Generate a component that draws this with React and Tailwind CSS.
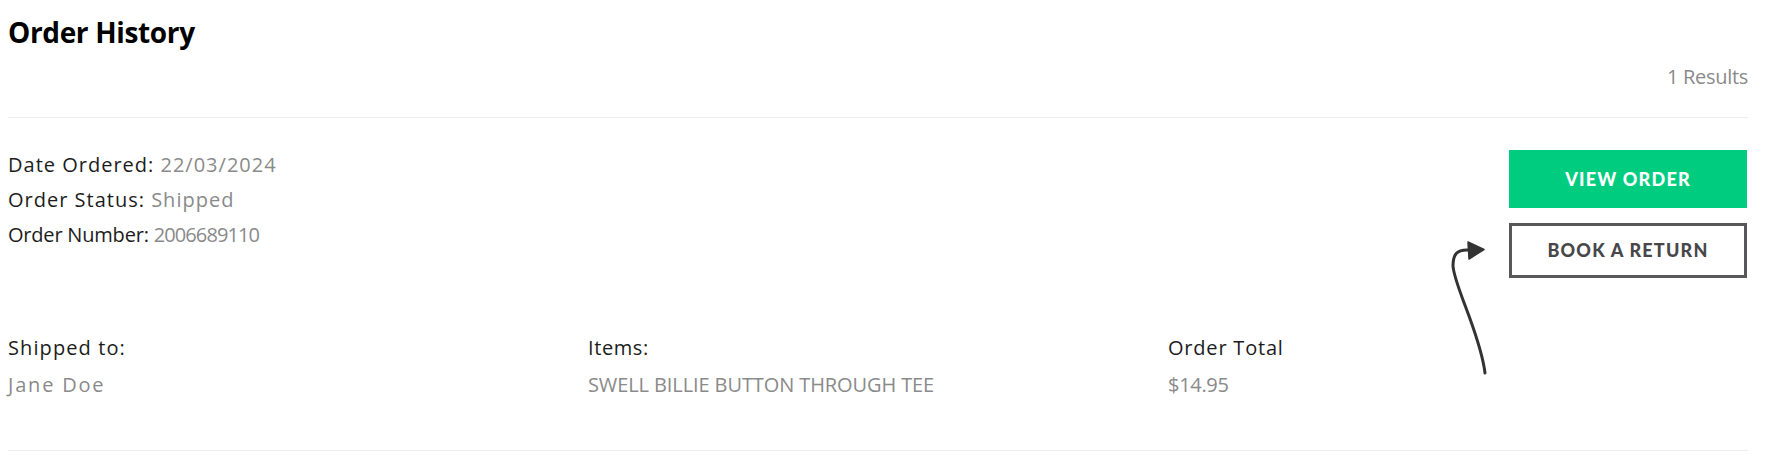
import React from "react";

function Arrow() {
  return (
    <svg
      className="absolute left-[-60px] top-[88px]"
      width="50"
      height="140"
      viewBox="0 0 50 140"
      fill="none"
    >
      <path
        d="M36 135 C34 118 28 100 20 78 C12 56 5 40 4 28 C4 16 8 12 18 12 L24 12"
        stroke="#333"
        strokeWidth="3"
        strokeLinecap="round"
        fill="none"
      />
      <path d="M19 4 L35 11.5 L20 21 Z" fill="#333" stroke="#333" strokeWidth="1.5" strokeLinejoin="round" />
    </svg>
  );
}

export default function App() {
  return (
    <div className="w-[1774px] h-[462px] bg-white pl-2 pr-[26px] font-['Open_Sans',sans-serif] text-[#1c1c1c]">
      <h1 className="pt-[15px] h-[50px] text-[28px] leading-[34px] font-bold tracking-[-0.35px] text-black">
        Order History
      </h1>
      <div className="mt-[14px] text-right text-[20px] leading-[26px] tracking-[-0.3px] text-[#8a8a8a]">1 Results</div>
      <div className="mt-[27px] h-px bg-[#ececec]" />
      <div className="mt-[29px] flex items-start justify-between">
        <div className="text-[20px] leading-[35px]">
          <div className="tracking-[1px]">
            Date Ordered: <span className="text-[#8a8a8a]">22/03/2024</span>
          </div>
          <div className="tracking-[1px]">
            Order Status: <span className="text-[#8a8a8a]">Shipped</span>
          </div>
          <div className="tracking-[-0.2px]">
            Order Number: <span className="text-[#8a8a8a] tracking-[-0.9px]">2006689110</span>
          </div>
        </div>
        <div className="relative mt-[3px] mr-px flex w-[238px] flex-col gap-[15px] font-['Lato',sans-serif]">
          <button className="h-[58px] w-full bg-[#00cc7f] text-[18px] font-black uppercase tracking-[1.2px] text-white">
            View Order
          </button>
          <button className="h-[55px] w-full border-[3px] border-[#58585a] bg-white text-[18px] font-black uppercase tracking-[1.2px] text-[#47474a]">
            Book a Return
          </button>
          <Arrow />
        </div>
      </div>
      <div className="mt-[51px] grid grid-cols-3 text-[20px] leading-[37px]">
        <div>
          <div className="tracking-[1.1px]">Shipped to:</div>
          <div className="tracking-[1.8px] text-[#8a8a8a]">Jane Doe</div>
        </div>
        <div>
          <div className="tracking-[0.6px]">Items:</div>
          <div className="tracking-[-0.1px] text-[#8a8a8a]">SWELL BILLIE BUTTON THROUGH TEE</div>
        </div>
        <div>
          <div className="tracking-[0.8px]">Order Total</div>
          <div className="tracking-[-0.3px] text-[#8a8a8a]">$14.95</div>
        </div>
      </div>
      <div className="mt-[47px] h-px bg-[#ececec]" />
    </div>
  );
}
